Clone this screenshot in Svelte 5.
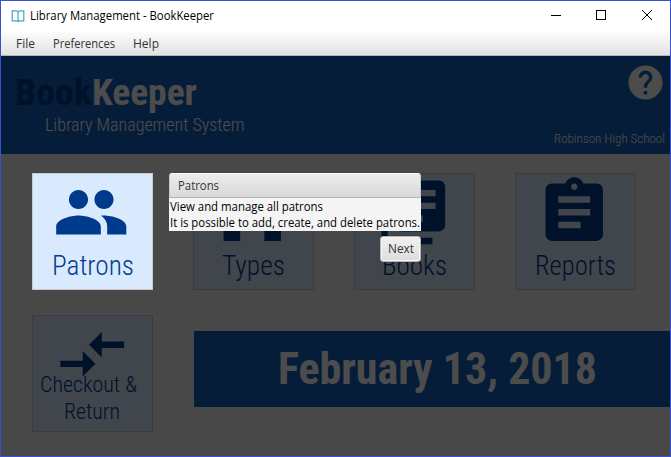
<script>
  const icons = {
    people: 'M16 11c1.66 0 2.99-1.34 2.99-3S17.66 5 16 5c-1.66 0-3 1.34-3 3s1.34 3 3 3zm-8 0c1.66 0 2.99-1.34 2.99-3S9.66 5 8 5C6.34 5 5 6.34 5 8s1.34 3 3 3zm0 2c-2.33 0-7 1.17-7 3.5V19h14v-2.5c0-2.33-4.67-3.5-7-3.5zm8 0c-.29 0-.62.02-.97.05 1.16.84 1.97 1.97 1.97 3.45V19h6v-2.5c0-2.33-4.67-3.5-7-3.5z',
    types: 'M3 3h18v18h-5.2v-7h-7.6v7H3z',
    books: 'M4 6H2v14c0 1.1.9 2 2 2h14v-2H4V6zm16-4H8c-1.1 0-2 .9-2 2v12c0 1.1.9 2 2 2h12c1.1 0 2-.9 2-2V4c0-1.1-.9-2-2-2zm-1 9H9V9h10v2zm-4 4H9v-2h6v2zm4-8H9V5h10v2z',
    reports: 'M19 3h-4.18C14.4 1.84 13.3 1 12 1c-1.3 0-2.4.84-2.82 2H5c-1.1 0-2 .9-2 2v14c0 1.1.9 2 2 2h14c1.1 0 2-.9 2-2V5c0-1.1-.9-2-2-2zm-7 0c.55 0 1 .45 1 1s-.45 1-1 1-1-.45-1-1 .45-1 1-1zm2 14H7v-2h7v2zm3-4H7v-2h10v2zm0-4H7V7h10v2z',
    checkout: 'M9.01 14H2v2h7.01v3L13 15l-3.99-4v3zm5.98-1v-3H22V8h-7.01V5L11 9l3.99 4z',
  };
  const cards = [
    { name: 'Patrons', icon: icons.people, width: 82, active: true },
    { name: 'Types', icon: icons.types, width: 63 },
    { name: 'Books', icon: icons.books, width: 65 },
    { name: 'Reports', icon: icons.reports, width: 81 },
  ];
</script>

{#snippet label(text, width, size, kind)}
  <svg class="label {kind}" {width} height={Math.round(size * 1.2)} font-size={size}>
    <text x="0" y={Math.round(size * 0.95)} textLength={width} lengthAdjust="spacingAndGlyphs">{text}</text>
  </svg>
{/snippet}

<div class="window">
  <div class="titlebar">
    <svg class="logo" width="14" height="14" viewBox="0 0 14 14">
      <path d="M7 3L5.5 1.8H1.2V11.8H5.5L7 12.6L8.500 11.8H12.800V1.800H8.500L7 3V12" />
    </svg>
    {@render label('Library Management - BookKeeper', 184, 12, 'ui')}
    <svg class="controls" width="104" height="14" viewBox="0 0 104 14" shape-rendering="crispEdges">
      <path d="M2 6.5h10M47.5 1.5h9v9h-9z" />
      <path d="M93 1l10 10M103 1l-10 10" shape-rendering="auto" />
    </svg>
  </div>
  <div class="menubar">
    {@render label('File', 19, 12, 'ui')}
    {@render label('Preferences', 62, 12, 'ui')}
    {@render label('Help', 26, 12, 'ui')}
  </div>

  <main>
    <header>
      <div class="brand">
        <div class="name">
          {@render label('Book', 77, 37, 'bold dark')}{@render label('Keeper', 105, 37, 'bold')}
        </div>
        <div class="subtitle">{@render label('Library Management System', 199.5, 18, 'light')}</div>
      </div>
      <div class="side">
        <svg class="help" width="41" height="41" viewBox="0 0 24 24">
          <path d="M12 2C6.48 2 2 6.48 2 12s4.48 10 10 10 10-4.48 10-10S17.52 2 12 2zm1 17h-2v-2h2v2zm2.07-7.75l-.9.92C13.45 12.9 13 13.5 13 15h-2v-.5c0-1.1.45-2.1 1.17-2.83l1.24-1.26c.37-.36.59-.86.59-1.41 0-1.1-.9-2-2-2s-2 .9-2 2H8c0-2.21 1.79-4 4-4s4 1.79 4 4c0 .88-.36 1.68-.93 2.25z" />
        </svg>
        {@render label('Robinson High School', 111, 13.5, 'light')}
      </div>
    </header>

    <div class="grid">
      {#each cards as card}
        <div class="card" class:active={card.active}>
          <svg class="icon" width="76.5" height="76.5" viewBox="0 0 24 24"><path d={card.icon} /></svg>
          {@render label(card.name, card.width, 27, 'light')}
        </div>
      {/each}
      <div class="card checkout">
        <svg class="icon" width="76.5" height="76.5" viewBox="0 0 24 24"><path d={icons.checkout} /></svg>
        {@render label('Checkout &', 97, 22.5, 'light')}
        {@render label('Return', 56, 22.5, 'light')}
      </div>
      <div class="banner">{@render label('February 13, 2018', 319, 44, 'bold')}</div>
    </div>

    <div class="overlay"></div>

    <div class="tour">
      <div class="pane">
        <div class="pane-title">{@render label('Patrons', 41, 12, 'ui')}</div>
        <div class="pane-body">
          {@render label('View and manage all patrons', 153, 12, 'ui')}
          {@render label('It is possible to add, create, and delete patrons.', 250, 12, 'ui')}
        </div>
      </div>
      <button>{@render label('Next', 26, 12, 'ui')}</button>
    </div>
  </main>
</div>

<style>
  .window {
    box-sizing: border-box;
    width: 671px;
    height: 457px;
    border: 1px solid #3b50ce;
    display: flex;
    flex-direction: column;
    background: #fff;
    overflow: hidden;
  }
  svg { display: block; flex: none; }
  .label { overflow: visible; fill: currentColor; }
  .ui { font-family: "Open Sans", "Noto Sans", sans-serif; font-stretch: 90%; }
  .light { font-family: Roboto, sans-serif; font-stretch: 75%; font-weight: 300; }
  .bold { font-family: Roboto, sans-serif; font-stretch: 75%; font-weight: 700; }
  .titlebar {
    height: 30px;
    display: flex;
    align-items: center;
    padding: 0 17px 0 10px;
    gap: 5px;
    color: #000;
  }
  .logo { fill: none; stroke: #45a5c4; stroke-width: 1.2; }
  .controls { margin-left: auto; fill: none; stroke: #000; stroke-width: 1; }
  .menubar {
    box-sizing: border-box;
    height: 25px;
    display: flex;
    align-items: center;
    gap: 18px;
    padding: 2px 0 0 15px;
    background: linear-gradient(#fdfdfd, #e2e2e2);
    border-bottom: 1px solid #b5b5b5;
    color: #333;
  }
  main { position: relative; flex: 1; background: #f1f1f1; }
  header {
    height: 98px;
    display: flex;
    justify-content: space-between;
    background: #1761be;
    color: #fff;
  }
  .brand { padding: 14px 0 0 14px; }
  .name { display: flex; }
  .dark { color: #003a8c; }
  .subtitle { padding: 0 0 0 30px; }
  .side {
    display: flex;
    flex-direction: column;
    align-items: flex-end;
    padding: 6px 5px 0 0;
  }
  .help { fill: currentColor; margin-bottom: 27px; margin-right: -1px; }
  .grid {
    display: grid;
    grid-template-columns: repeat(4, 121px);
    grid-auto-rows: 117px;
    gap: 25px 40px;
    padding: 19px 0 0 31px;
  }
  .card {
    box-sizing: border-box;
    display: flex;
    flex-direction: column;
    align-items: center;
    border: 1px solid #c8c8c8;
    background: #d9eaff;
    color: #003a8c;
  }
  .active { position: relative; z-index: 2; }
  .icon { fill: currentColor; margin: 0 2px -2px 0; }
  .checkout .icon { margin: 0 0 -22px; }
  .checkout .label { margin-right: 8px; }
  .checkout .label + .label { margin: 0 2px 0 0; }
  .banner {
    grid-column: 2 / span 3;
    align-self: start;
    margin: 16px -34px 0 1px;
    height: 76px;
    display: flex;
    align-items: center;
    justify-content: center;
    padding: 0 0 2px 11px;
    background: #1761be;
    color: #fff;
    box-sizing: border-box;
  }
  .overlay { position: absolute; inset: 0; z-index: 1; background: rgba(0, 0, 0, .7); }
  .tour {
    position: absolute;
    z-index: 3;
    left: 168px;
    top: 117px;
    width: 252px;
    display: flex;
    flex-direction: column;
    align-items: flex-end;
    gap: 5px;
  }
  .pane { width: 252px; color: #000; }
  .pane-title {
    box-sizing: border-box;
    height: 25px;
    padding: 5px 8px;
    border: 1px solid #c8c8c8;
    border-top-color: #fff;
    border-bottom-color: #b5b5b5;
    border-radius: 3px 3px 0 0;
    background: linear-gradient(#ececec, #d9d9d9);
    color: #333;
  }
  .pane-body {
    box-sizing: border-box;
    height: 33px;
    padding: 2px 0 0 1px;
    display: flex;
    flex-direction: column;
    gap: 2px;
    background: #f4f4f4;
  }
  button {
    box-sizing: border-box;
    width: 41px;
    height: 26px;
    display: flex;
    align-items: center;
    justify-content: center;
    padding: 0;
    border: 1px solid #b5b5b5;
    border-radius: 3px;
    background: linear-gradient(#f1f1f1, #dcdcdc);
    box-shadow: inset 0 0 0 1px #f5f5f5;
    color: #333;
  }
</style>
